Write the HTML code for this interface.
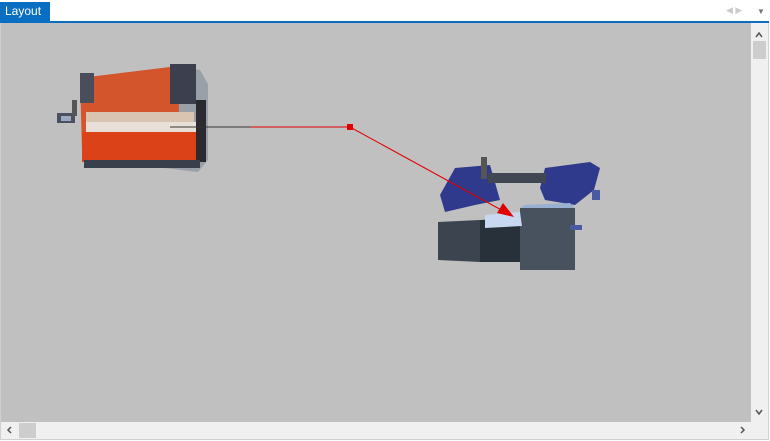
<!DOCTYPE html>
<html><head><style>
body{margin:0;width:770px;height:441px;background:#fff;overflow:hidden;font-family:"Liberation Sans",sans-serif;position:relative}
</style></head><body>
<div style="position:absolute;left:0;top:2px;width:50px;height:19px;background:#0a6fc2;color:#fff;font-size:12px;line-height:19px;padding-left:5px;box-sizing:border-box">Layout</div>
<div style="position:absolute;left:0;top:21px;width:769px;height:2px;background:#0a6fc2"></div>
<div style="position:absolute;left:726px;top:5px;font-size:9px;color:#ccc">◀ ▶</div>
<div style="position:absolute;left:757px;top:7px;font-size:8px;color:#777">▼</div>
<div style="position:absolute;left:0;top:23px;width:769px;height:417px;border:1px solid #d0d0d0;border-top:none;box-sizing:border-box;background:#f0f0f0"></div>
<div style="position:absolute;left:1px;top:23px;width:750px;height:399px;background:#c0c0c0"></div>
<div style="position:absolute;left:753px;top:41px;width:13px;height:18px;background:#cdcdcd"></div>
<div style="position:absolute;left:19px;top:423px;width:17px;height:15px;background:#cdcdcd"></div>
<svg style="position:absolute;left:0;top:0" width="770" height="441">
<g stroke="#555" stroke-width="1.5" fill="none">
<polyline points="756,37 759,33 762,37"/>
<polyline points="756,410 759,414 762,410"/>
<polyline points="11,427 8,430 11,433"/>
<polyline points="741,427 744,430 741,433"/>
</g>
<polygon points="82,78 180,66 200,70 208,84 208,160 198,172 96,160 84,150" fill="#9aa0a8"/>
<polygon points="80,78 178,66 180,156 82,150" fill="#d2552c"/>
<rect x="80" y="73" width="14" height="30" fill="#4a4e5a"/>
<rect x="170" y="64" width="26" height="40" fill="#3c3f4e"/>
<rect x="86" y="112" width="108" height="10" fill="#d9c4b2"/>
<rect x="86" y="122" width="110" height="10" fill="#e8e0d8"/>
<rect x="82" y="132" width="116" height="30" fill="#dc4218"/>
<rect x="196" y="100" width="10" height="62" fill="#2a2a30"/>
<rect x="84" y="160" width="116" height="8" fill="#3a3f4c"/>
<rect x="57" y="113" width="18" height="10" fill="#4a5060"/>
<rect x="61" y="116" width="10" height="5" fill="#9aa8c0"/>
<rect x="72" y="100" width="5" height="16" fill="#555"/>
<polygon points="455,168 490,165 500,200 475,205 445,212 440,195" fill="#2f3a8c"/>
<polygon points="545,168 590,162 600,168 594,190 575,205 545,200 540,188" fill="#2f3a8c"/>
<rect x="481" y="157" width="6" height="22" fill="#555"/>
<rect x="488" y="173" width="58" height="10" fill="#404652"/>
<polygon points="438,222 480,220 480,262 438,260" fill="#3c4450"/>
<polygon points="480,220 520,218 520,262 480,262" fill="#28303a"/>
<polygon points="520,208 575,208 575,270 520,270" fill="#48525e"/>
<polygon points="485,215 520,212 522,226 485,228" fill="#c8d8f0"/>
<polygon points="520,208 575,208 570,203 525,205" fill="#9ab0d0"/>
<rect x="570" y="225" width="12" height="5" fill="#4a5aa0"/>
<rect x="592" y="190" width="8" height="10" fill="#4a5aa0"/>
<line x1="170" y1="127" x2="250" y2="127" stroke="#333" stroke-width="1"/>
<line x1="250" y1="127" x2="350" y2="127" stroke="#e00000" stroke-width="1"/>
<rect x="347" y="124" width="6" height="6" fill="#e00000"/>
<line x1="350" y1="127" x2="505" y2="212" stroke="#e00000" stroke-width="1"/>
<polygon points="514,217 497,213 503,203" fill="#e00000"/>
</svg>
</body></html>
